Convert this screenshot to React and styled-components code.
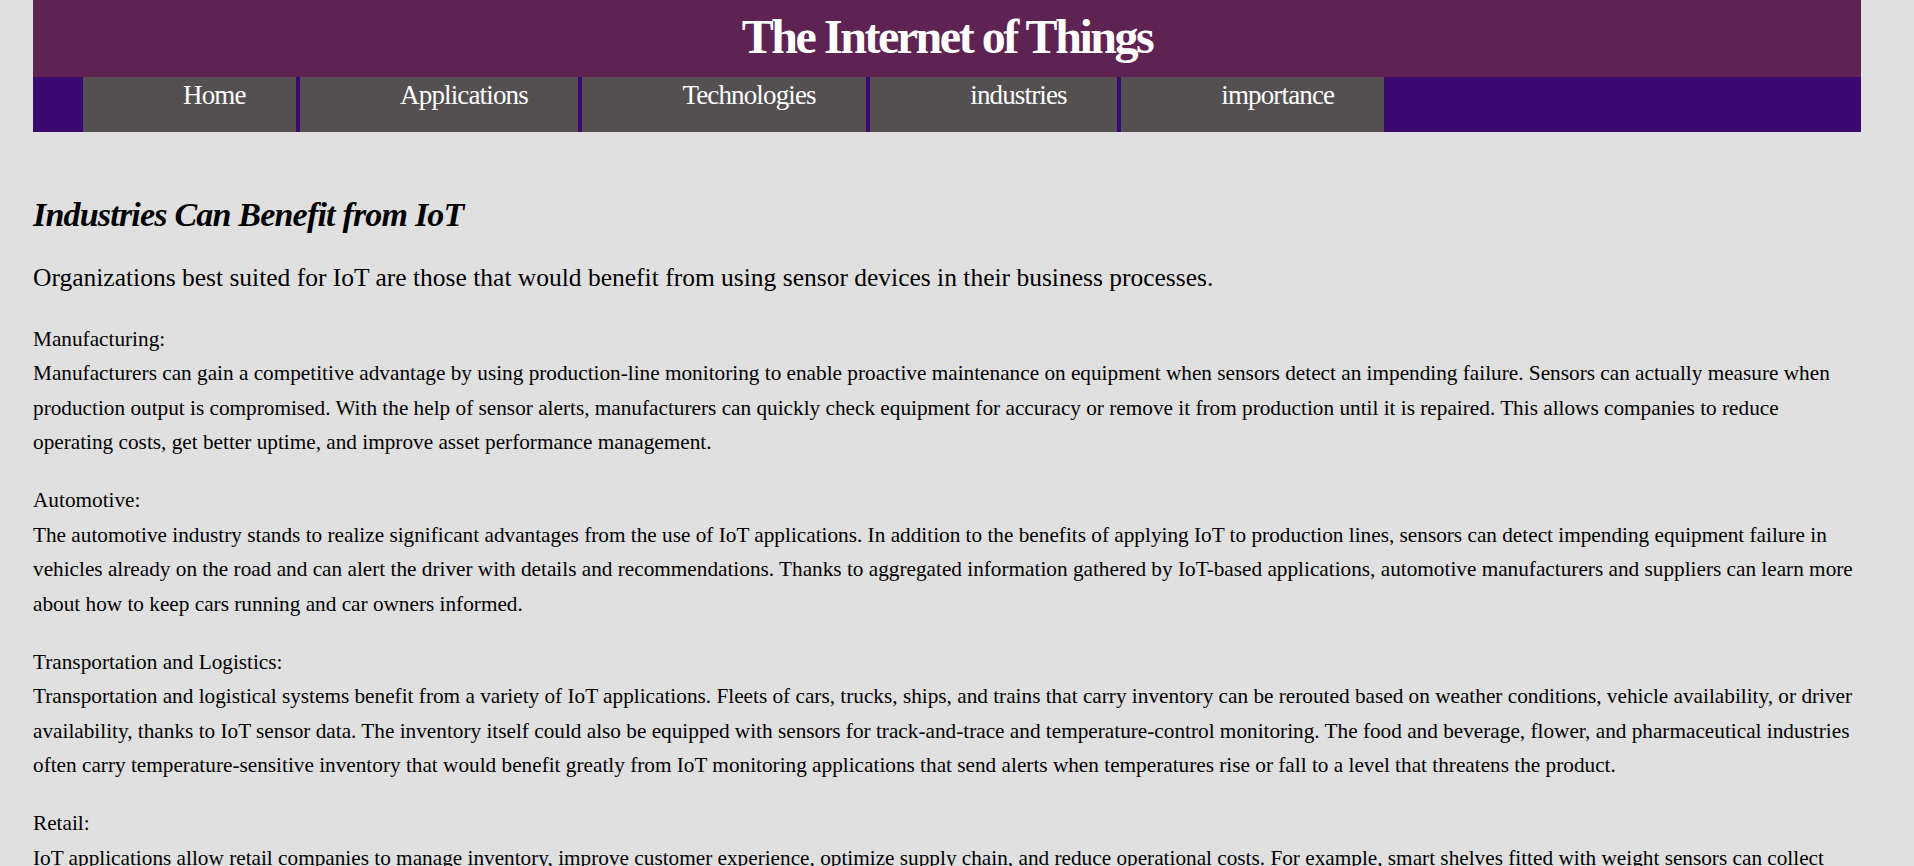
import React from 'react';
import styled, { createGlobalStyle } from 'styled-components';

const GlobalStyle = createGlobalStyle`
  html, body {
    margin: 0;
    padding: 0;
    background: #e0e0e0;
  }
  body {
    font-family: "Liberation Serif", "Times New Roman", serif;
    color: #000;
  }
`;

const Page = styled.div`
  margin: 0 53px 0 33px;
  padding-bottom: 40px;
`;

const Header = styled.header``;

const Title = styled.h1`
  margin: 0;
  height: 77px;
  box-sizing: border-box;
  padding-top: 9px;
  background: #5e2352;
  color: #fff;
  text-align: center;
  font-size: 48px;
  font-weight: bold;
  letter-spacing: -2.45px;
  line-height: normal;
`;

const Nav = styled.ul`
  display: flex;
  gap: 4.5px;
  margin: 0;
  padding: 0 0 0 50px;
  height: 55px;
  list-style: none;
  background: #3b0a70;
`;

const NavItem = styled.li`
  background: #545051;
  padding: 3px 50px 0 100px;
  color: #fff;
  font-size: 27px;
  letter-spacing: -0.85px;
  line-height: normal;
`;

const Heading = styled.h2`
  margin: 63px 0 0;
  font-size: 34px;
  font-style: italic;
  font-weight: bold;
  letter-spacing: -0.8px;
  line-height: 39px;
`;

const Intro = styled.p`
  margin: 30px 0 0;
  font-size: 25.5px;
  line-height: 28px;
`;

const Section = styled.p`
  margin: 29.5px 0 0;
  font-size: 21.25px;
  line-height: 34.5px;

  & + & {
    margin-top: 23.5px;
  }
`;

const navLinks = ['Home', 'Applications', 'Technologies', 'industries', 'importance'];

const sections = [
  {
    name: 'Manufacturing:',
    text: 'Manufacturers can gain a competitive advantage by using production-line monitoring to enable proactive maintenance on equipment when sensors detect an impending failure. Sensors can actually measure when production output is compromised. With the help of sensor alerts, manufacturers can quickly check equipment for accuracy or remove it from production until it is repaired. This allows companies to reduce operating costs, get better uptime, and improve asset performance management.',
  },
  {
    name: 'Automotive:',
    text: 'The automotive industry stands to realize significant advantages from the use of IoT applications. In addition to the benefits of applying IoT to production lines, sensors can detect impending equipment failure in vehicles already on the road and can alert the driver with details and recommendations. Thanks to aggregated information gathered by IoT-based applications, automotive manufacturers and suppliers can learn more about how to keep cars running and car owners informed.',
  },
  {
    name: 'Transportation and Logistics:',
    text: 'Transportation and logistical systems benefit from a variety of IoT applications. Fleets of cars, trucks, ships, and trains that carry inventory can be rerouted based on weather conditions, vehicle availability, or driver availability, thanks to IoT sensor data. The inventory itself could also be equipped with sensors for track-and-trace and temperature-control monitoring. The food and beverage, flower, and pharmaceutical industries often carry temperature-sensitive inventory that would benefit greatly from IoT monitoring applications that send alerts when temperatures rise or fall to a level that threatens the product.',
  },
  {
    name: 'Retail:',
    text: 'IoT applications allow retail companies to manage inventory, improve customer experience, optimize supply chain, and reduce operational costs. For example, smart shelves fitted with weight sensors can collect RFID-based information and send the data to the IoT platform to automatically monitor inventory and trigger alerts if items are running low. Beacons can push targeted offers and promotions to customers to provide an engaging experience.',
  },
  {
    name: 'Public Sector:',
    text: 'The benefits of IoT in the public sector and other service-related environments are similarly wide-ranging. For example, government-owned utilities can use IoT-based applications to notify their users of mass outages and even of smaller interruptions of water, power, or sewer services.',
  },
];

const App = () => (
  <>
    <GlobalStyle />
    <Page>
      <Header>
        <Title>The Internet of Things</Title>
        <Nav>
          {navLinks.map(link => (
            <NavItem key={link}>{link}</NavItem>
          ))}
        </Nav>
      </Header>
      <Heading>Industries Can Benefit from IoT</Heading>
      <Intro>
        Organizations best suited for IoT are those that would benefit from using sensor
        devices in their business processes.
      </Intro>
      {sections.map(s => (
        <Section key={s.name}>
          {s.name}
          <br />
          {s.text}
        </Section>
      ))}
    </Page>
  </>
);

export default App;
